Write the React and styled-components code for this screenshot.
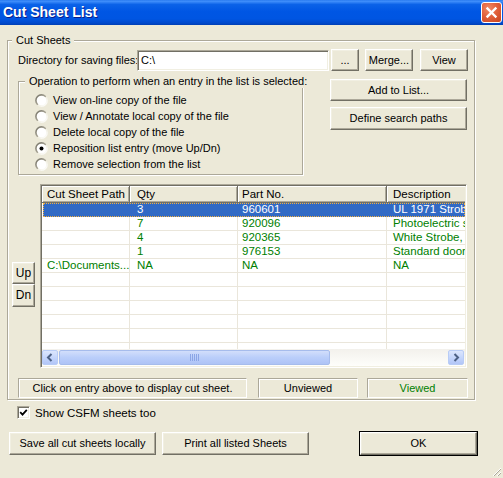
import React from "react";
import styled, { createGlobalStyle } from "styled-components";

const Global = createGlobalStyle`
  html, body { margin: 0; padding: 0; background: #ECE9D8; }
  body { font-family: "Liberation Sans", Arial, sans-serif; font-size: 11px; color: #000; }
  * { box-sizing: border-box; }
`;

const Window = styled.div`
  width: 503px;
  height: 478px;
  display: flex;
  flex-direction: column;
  background: #ECE9D8;
  position: relative;
  overflow: hidden;
`;

const TitleBar = styled.div`
  height: 25px;
  flex: none;
  display: flex;
  align-items: center;
  justify-content: space-between;
  padding: 0 1px 1px 3px;
  background: linear-gradient(to bottom, #2C7CF0 0%, #3D8CFA 6%, #0B62E8 18%, #0056E4 45%, #0055E2 75%, #0049CC 92%, #003FB5 100%);
`;

const Title = styled.div`
  color: #fff;
  font-family: "Liberation Sans", Arial, sans-serif;
  font-weight: bold;
  font-size: 14px;
  text-shadow: 1px 1px 0 #0A1C8A;
`;

const CloseBtn = styled.div`
  width: 21px;
  height: 21px;
  border: 1px solid #fff;
  border-radius: 3px;
  background: radial-gradient(circle at 35% 30%, #F08A66 0%, #E2613C 45%, #C8431C 100%);
  display: flex;
  align-items: center;
  justify-content: center;
`;

const Body = styled.div`
  flex: 1;
  padding: 9px 0 0 7px;
  display: flex;
  flex-direction: column;
`;

const Group = styled.fieldset`
  margin: 0;
  width: ${(p) => p.$w}px;
  height: ${(p) => (p.$h ? `${p.$h}px` : "auto")};
  border: 1px solid #ACA899;
  box-shadow: 1px 1px 0 #fff, inset 1px 1px 0 #fff;
  padding: ${(p) => p.$pad};
  min-width: 0;
  flex: none;
`;

const Legend = styled.legend`
  padding: 0 4px;
  font-family: "Liberation Sans", Arial, sans-serif;
  font-size: 11px;
  line-height: 13px;
  white-space: nowrap;
  background: #ECE9D8;
`;

const Row = styled.div`
  display: flex;
  align-items: ${(p) => p.$align || "center"};
  margin-top: ${(p) => p.$mt || 0}px;
  margin-left: ${(p) => p.$ml || 0}px;
  height: ${(p) => (p.$h ? `${p.$h}px` : "auto")};
`;

const Label = styled.div`
  width: ${(p) => p.$w}px;
  flex: none;
  white-space: nowrap;
`;

const TextInput = styled.div`
  width: 192px;
  height: 21px;
  margin-top: 1px;
  flex: none;
  background: #fff;
  border: 1px solid;
  border-color: #ACA899 #fff #fff #ACA899;
  box-shadow: inset 1px 1px 0 #716F64, inset -1px -1px 0 #F1EFE2;
  padding: 3px 0 0 3px;
  line-height: 13px;
`;

const Button = styled.div`
  width: ${(p) => p.$w}px;
  height: ${(p) => p.$h || 22}px;
  margin-left: ${(p) => p.$ml || 0}px;
  margin-top: ${(p) => p.$mt || 0}px;
  flex: none;
  display: flex;
  align-items: center;
  justify-content: center;
  background: #ECE9D8;
  border: 1px solid;
  border-color: #fff #716F64 #716F64 #fff;
  box-shadow: inset -1px -1px 0 #ACA899, inset 1px 1px 0 #F1EFE2;
  white-space: nowrap;
  font-size: ${(p) => p.$fs || 11}px;
  padding-bottom: 1px;
  ${(p) =>
    p.$default &&
    `
    outline: 1px solid #000;
    outline-offset: 0;
  `}
`;

const Column = styled.div`
  display: flex;
  flex-direction: column;
  margin-left: ${(p) => p.$ml || 0}px;
  margin-top: ${(p) => p.$mt || 0}px;
  width: ${(p) => (p.$w ? `${p.$w}px` : "auto")};
  flex: none;
`;

const RadioList = styled.div`
  display: flex;
  flex-direction: column;
  margin: 4px 0 0 10px;
`;

const RadioRow = styled.div`
  display: flex;
  align-items: center;
  height: 16px;
  gap: 5px;
  white-space: nowrap;
`;

const ListView = styled.div`
  width: 427px;
  height: 184px;
  margin-left: 5px;
  flex: none;
  border: 1px solid;
  border-color: #ACA899 #fff #fff #ACA899;
  box-shadow: inset 1px 1px 0 #716F64, inset -1px -1px 0 #F1EFE2;
  padding: 1px;
  display: flex;
  flex-direction: column;
  background: #fff;
`;

const Table = styled.div`
  flex: 1;
  overflow: hidden;
  display: flex;
  flex-direction: column;
`;

const HeaderRow = styled.div`
  display: flex;
  height: 17px;
  flex: none;
`;

const HeaderCell = styled.div`
  width: ${(p) => p.$w}px;
  flex: none;
  background: #ECE9D8;
  border-right: 1px solid #716F64;
  border-bottom: 1px solid #716F64;
  box-shadow: inset 1px 1px 0 #fff, inset -1px -1px 0 #ACA899;
  padding: 2px 0 0 ${(p) => p.$pl || 6}px;
  line-height: 13px;
  font-size: 11.5px;
  white-space: nowrap;
  overflow: hidden;
`;

const DataRow = styled.div`
  display: flex;
  height: 14px;
  flex: none;
  ${(p) =>
    p.$sel &&
    `
    background: #316AC5;
    outline: 1px dotted #F2B040;
    outline-offset: -1px;
    margin-left: 1px;
  `}
`;

const Cell = styled.div`
  width: ${(p) => p.$w}px;
  flex: none;
  border-right: 1px solid ${(p) => (p.$sel ? "#316AC5" : "#EAE6DB")};
  border-bottom: 1px solid ${(p) => (p.$sel ? "#316AC5" : "#EAE6DB")};
  padding-left: ${(p) => p.$pl || 6}px;
  line-height: 13px;
  font-size: 11.5px;
  color: ${(p) => (p.$sel ? "#fff" : "#008000")};
  white-space: nowrap;
  overflow: hidden;
`;

const HScroll = styled.div`
  height: 17px;
  flex: none;
  display: flex;
  background: linear-gradient(to bottom, #F3F1EC, #FEFEFB);
  padding: 1px 0;
`;

const ScrollBtn = styled.div`
  width: 16px;
  flex: none;
  border: 1px solid #B8CCF6;
  border-radius: 2px;
  background: linear-gradient(to bottom, #DCE6FD, #C1D3FB 60%, #B2C6F7);
  display: flex;
  align-items: center;
  justify-content: center;
  margin-right: ${(p) => p.$mr || 0}px;
`;

const Thumb = styled.div`
  width: ${(p) => p.$w}px;
  flex: none;
  margin-left: 1px;
  border: 1px solid #A6BCEC;
  border-radius: 2px;
  background: linear-gradient(to bottom, #D2DEFB, #BACEFA 50%, #AEC3F6);
  display: flex;
  align-items: center;
  justify-content: center;
`;

const Track = styled.div`
  flex: 1;
`;

const StatusBox = styled.div`
  width: ${(p) => p.$w}px;
  height: 20px;
  flex: none;
  margin-left: ${(p) => p.$ml || 0}px;
  border: 1px solid;
  border-color: #ACA899 #fff #fff #ACA899;
  box-shadow: 1px 1px 0 #fff inset;
  display: flex;
  align-items: center;
  justify-content: center;
  font-size: 11px;
  padding-bottom: 1px;
  color: ${(p) => p.$color || "#000"};
  white-space: nowrap;
`;

const CheckBox = styled.div`
  width: 13px;
  height: 13px;
  flex: none;
  background: #fff;
  border: 1px solid;
  border-color: #ACA899 #fff #fff #ACA899;
  box-shadow: inset 1px 1px 0 #716F64, inset -1px -1px 0 #F1EFE2;
  display: flex;
  align-items: center;
  justify-content: center;
`;

const CheckLabel = styled.div`
  margin-left: 5px;
  font-size: 11.5px;
  white-space: nowrap;
`;

const Grip = styled.svg`
  position: absolute;
  right: 1px;
  bottom: 1px;
`;

const Radio = ({ checked, id }) => (
  <svg width="13" height="13" viewBox="0 0 13 13">
    <defs>
      <linearGradient id={`rg${id}`} x1="0" y1="0" x2="1" y2="1">
        <stop offset="0" stopColor="#716F64" />
        <stop offset="0.5" stopColor="#ACA899" />
        <stop offset="0.55" stopColor="#F1EFE2" />
        <stop offset="1" stopColor="#fff" />
      </linearGradient>
    </defs>
    <circle cx="6.5" cy="6.5" r="5.6" fill="#fff" stroke={`url(#rg${id})`} strokeWidth="1.6" />
    {checked && <circle cx="6.5" cy="6.5" r="2" fill="#000" />}
  </svg>
);

const radios = [
  "View on-line copy of the file",
  "View / Annotate local copy of the file",
  "Delete local copy of the file",
  "Reposition list entry (move Up/Dn)",
  "Remove selection from the list",
];

const cols = [
  { name: "Cut Sheet Path", w: 88, pl: 5 },
  { name: "Qty", w: 108, pl: 7 },
  { name: "Part No.", w: 149, pl: 4 },
  { name: "Description", w: 150, pl: 6 },
];

const rows = [
  ["", "3", "960601", "UL 1971 Strobe, 15/75 cd"],
  ["", "7", "920096", "Photoelectric smoke detector"],
  ["", "4", "920365", "White Strobe, 2-wire"],
  ["", "1", "976153", "Standard door Closer"],
  ["C:\\Documents...", "NA", "NA", "NA"],
  ["", "", "", ""],
  ["", "", "", ""],
  ["", "", "", ""],
  ["", "", "", ""],
  ["", "", "", ""],
  ["", "", "", ""],
];

export default function App() {
  return (
    <>
      <Global />
      <Window>
        <TitleBar>
          <Title>Cut Sheet List</Title>
          <CloseBtn>
            <svg width="13" height="13" viewBox="0 0 13 13">
              <path d="M2.5 2.5 L10.5 10.5 M10.5 2.5 L2.5 10.5" stroke="#fff" strokeWidth="2.4" strokeLinecap="square" />
            </svg>
          </CloseBtn>
        </TitleBar>
        <Body>
          <Group $w={468} $pad="2px 6px 1px 4px">
            <Legend>Cut Sheets</Legend>
            <Row $ml={6} $h={22}>
              <Label $w={119}>Directory for saving files:</Label>
              <TextInput>C:\</TextInput>
              <Button $w={28} $ml={2}>...</Button>
              <Button $w={48} $ml={6}>Merge...</Button>
              <Button $w={48} $ml={7}>View</Button>
            </Row>
            <Row $align="flex-start" $mt={4}>
              <Column $ml={6}>
                <Group $w={285} $h={100} $pad="0 6px 0 6px">
                  <Legend>Operation to perform when an entry in the list is selected:</Legend>
                  <RadioList>
                    {radios.map((r, i) => (
                      <RadioRow key={r}>
                        <Radio id={i} checked={i === 3} />
                        {r}
                      </RadioRow>
                    ))}
                  </RadioList>
                </Group>
              </Column>
              <Column $ml={27} $mt={4} $w={137}>
                <Button $w={137}>Add to List...</Button>
                <Button $w={137} $h={23} $mt={6}>Define search paths</Button>
              </Column>
            </Row>
            <Row $align="flex-start" $mt={9}>
              <Column $mt={78} $w={23}>
                <Button $w={23} $h={22} $fs={12}>Up</Button>
                <Button $w={23} $h={23} $fs={12}>Dn</Button>
              </Column>
              <ListView>
                <Table>
                  <HeaderRow>
                    {cols.map((c) => (
                      <HeaderCell key={c.name} $w={c.w} $pl={c.pl}>{c.name}</HeaderCell>
                    ))}
                  </HeaderRow>
                  {rows.map((r, i) => (
                    <DataRow key={i} $sel={i === 0}>
                      {r.map((v, j) => (
                        <Cell key={j} $w={j === 0 && i === 0 ? cols[j].w - 1 : cols[j].w} $pl={cols[j].pl} $sel={i === 0}>
                          {v}
                        </Cell>
                      ))}
                    </DataRow>
                  ))}
                </Table>
                <HScroll>
                  <ScrollBtn>
                    <svg width="8" height="9" viewBox="0 0 8 9">
                      <path d="M5.5 1 L2 4.5 L5.5 8" fill="none" stroke="#4D6185" strokeWidth="2" />
                    </svg>
                  </ScrollBtn>
                  <Thumb $w={271}>
                    <svg width="9" height="7" viewBox="0 0 9 7">
                      <path d="M0.5 0 V7 M2.5 0 V7 M4.5 0 V7 M6.5 0 V7 M8.5 0 V7" stroke="#8CA6E6" strokeWidth="1" />
                    </svg>
                  </Thumb>
                  <Track />
                  <ScrollBtn $mr={1}>
                    <svg width="8" height="9" viewBox="0 0 8 9">
                      <path d="M2.5 1 L6 4.5 L2.5 8" fill="none" stroke="#4D6185" strokeWidth="2" />
                    </svg>
                  </ScrollBtn>
                </HScroll>
              </ListView>
            </Row>
            <Row $mt={10} $ml={6}>
              <StatusBox $w={229}>Click on entry above to display cut sheet.</StatusBox>
              <StatusBox $w={100} $ml={11}>Unviewed</StatusBox>
              <StatusBox $w={101} $ml={9} $color="#008000">Viewed</StatusBox>
            </Row>
          </Group>
          <Row $mt={6} $ml={10} $h={13}>
            <CheckBox>
              <svg width="9" height="9" viewBox="0 0 9 9">
                <path d="M1.2 4.2 L3.5 6.6 L7.8 1.8" fill="none" stroke="#000" strokeWidth="1.8" />
              </svg>
            </CheckBox>
            <CheckLabel>Show CSFM sheets too</CheckLabel>
          </Row>
          <Row $mt={13} $ml={2}>
            <Button $w={147} $h={23}>Save all cut sheets locally</Button>
            <Button $w={147} $h={23} $ml={6}>Print all listed Sheets</Button>
            <Button $w={117} $h={23} $ml={51} $default>OK</Button>
          </Row>
        </Body>
        <Grip width="12" height="12" viewBox="0 0 12 12">
          <path d="M11 3 L3 11 M11 7 L7 11" stroke="#fff" strokeWidth="1" />
          <path d="M11 4 L4 11 M11 8 L8 11" stroke="#ACA899" strokeWidth="1" />
        </Grip>
      </Window>
    </>
  );
}
